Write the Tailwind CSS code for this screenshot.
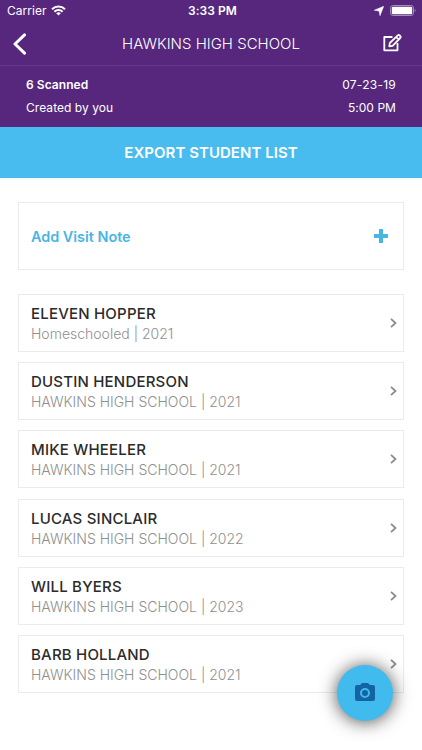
<!DOCTYPE html>
<html lang="en">
<head>
<meta charset="utf-8">
<title>Hawkins High School</title>
<script src="https://cdn.jsdelivr.net/npm/@tailwindcss/browser@4"></script>
</head>
<body class="bg-white font-['Inter',sans-serif]">
<div class="relative flex h-[750px] w-[422px] flex-col overflow-hidden bg-white">
  <header class="bg-[#56277d] text-white">
    <div class="grid h-[22px] grid-cols-3 items-center pr-[6px] pl-[7px] text-[12px] leading-[22px]">
      <div class="flex items-center gap-[5px]">
        <span class="tracking-[0.02px]">Carrier</span>
        <svg class="-mt-[1px] h-[11px] w-[15px]" viewBox="0 0 15 11" fill="none" stroke="#fff" stroke-width="2"><path d="M1 4.200a9.200 9.200 0 0 1 13 0M3.400 6.800a5.800 5.800 0 0 1 8.200 0"/><path d="M7.500 10.600 5.200 8.300a3.300 3.300 0 0 1 4.600 0z" fill="#fff" stroke="none"/></svg>
      </div>
      <span class="pl-[2px] text-center font-semibold tracking-[0.05px]">3:33 PM</span>
      <div class="flex items-center justify-end gap-[6px]">
        <svg class="h-[10px] w-[10px]" viewBox="0 0 10 10" fill="#fff" stroke="#fff" stroke-width=".5" stroke-linejoin="round"><path d="M9.700.3 6 9.700 5 5 .3 4.200z"/></svg>
        <svg class="-mt-[1px] h-[11px] w-[26px]" viewBox="0 0 26 11"><rect x=".5" y=".5" width="23" height="10" rx="2.600" fill="none" stroke="#a48dba"/><rect x="1.800" y="1.800" width="20.400" height="7.400" rx="1.300" fill="#fff"/><path d="M24.600 3.800c1.300.5 1.300 2.900 0 3.400z" fill="#a48dba"/></svg>
      </div>
    </div>
    <div class="grid h-[44px] grid-cols-[1fr_auto_1fr] items-center border-b border-[#633789] px-[13px]">
      <svg class="h-[22px] w-[14px]" viewBox="0 0 14 22" fill="none" stroke="#fff" stroke-width="3" stroke-linecap="round" stroke-linejoin="round"><path d="M11.500 1.800 2 11l9.500 9.200"/></svg>
      <h1 class="pt-[1px] text-[15px] font-light">HAWKINS HIGH SCHOOL</h1>
      <svg class="mr-[7px] -mt-[1px] h-[18px] w-[19px] justify-self-end" viewBox="0 0 19 18" fill="none" stroke="#fff" stroke-width="1.800" stroke-linejoin="round"><path d="M9.500 3H1.300v13.300h13.200V9"/><path d="M6.300 12.300 6.800 9 14.800 1.400q1-.8 2 .1l.5.6q.8.9-.1 1.900L9.600 11.800zM13.200 3l2.500 2.600"/></svg>
    </div>
    <div class="flex h-[61px] justify-between px-[26px] pt-[7px] text-[12px] leading-[23px]">
      <div><p class="font-semibold tracking-[0.05px]">6 Scanned</p><p class="tracking-[0.05px]">Created by you</p></div>
      <div class="text-right"><p class="tracking-[0.25px]">07-23-19</p><p class="tracking-[0.05px]">5:00 PM</p></div>
    </div>
  </header>
  <button class="h-[51px] shrink-0 bg-[#48bcee] pt-[1px] text-[15px] font-semibold tracking-[0.04px] text-white">EXPORT STUDENT LIST</button>
  <main class="flex flex-col px-[18px] pt-[24px]">
    <div class="mb-[24px] flex h-[68px] items-center justify-between border border-[#ebebeb] pr-[15px] pl-[12px] text-[#48b5e5]">
      <span class="pt-[1px] text-[14.4px] font-semibold">Add Visit Note</span>
      <svg class="h-[14px] w-[14px]" viewBox="0 0 14 14" fill="#48b5e5"><path d="M5.600 0h2.800q.6 0 .6.6V5h4.400q.6 0 .6.6v2.800q0 .6-.6.6H9v4.400q0 .6-.6.6H5.600q-.6 0-.6-.6V9H.6Q0 9 0 8.400V5.600Q0 5 .6 5H5V.6Q5 0 5.600 0z"/></svg>
    </div>
    <ul id="students" class="flex flex-col gap-[10.2px]"></ul>
  </main>
  <button aria-label="Scan" class="absolute top-[665px] left-[337px] flex size-[56px] items-center justify-center rounded-full bg-[#41bbee] shadow-[0_1px_18px_rgba(0,0,0,0.7)]">
    <svg class="-mt-[2px] h-[18px] w-[20px]" viewBox="0 0 20 18" fill="#1364a0"><path fill-rule="evenodd" d="M7 0h6l1.800 2H18q2 0 2 2v12q0 2-2 2H2q-2 0-2-2V4q0-2 2-2h3.200zM10 5a5 5 0 1 0 0 10 5 5 0 0 0 0-10z"/><circle cx="10" cy="10" r="3"/></svg>
  </button>
</div>
<template id="row">
  <li class="flex h-[58px] items-center justify-between border border-[#ebebeb] pr-[6px] pl-[12px]">
    <div class="pt-[2px]">
      <p class="name text-[15px] leading-[20px] font-medium tracking-[0.2px] whitespace-nowrap text-[#2b2b2b]"></p>
      <p class="info text-[14px] leading-[20px] font-light whitespace-nowrap text-[#8f8f8f]"></p>
    </div>
    <svg class="h-[10px] w-[7px]" viewBox="0 0 7 10" fill="none" stroke="#8b8b8b" stroke-width="1.800"><path d="M1 .8 5.500 5 1 9.200"/></svg>
  </li>
</template>
<script>
const students = [
  ['ELEVEN HOPPER', 'Homeschooled | 2021'],
  ['DUSTIN HENDERSON', 'HAWKINS HIGH SCHOOL | 2021'],
  ['MIKE WHEELER', 'HAWKINS HIGH SCHOOL | 2021'],
  ['LUCAS SINCLAIR', 'HAWKINS HIGH SCHOOL | 2022'],
  ['WILL BYERS', 'HAWKINS HIGH SCHOOL | 2023'],
  ['BARB HOLLAND', 'HAWKINS HIGH SCHOOL | 2021'],
];
const list = document.getElementById('students');
const row = document.getElementById('row');
for (const [name, info] of students) {
  const item = row.content.cloneNode(true);
  item.querySelector('.name').textContent = name;
  item.querySelector('.info').textContent = info;
  list.append(item);
}
</script>
</body>
</html>
